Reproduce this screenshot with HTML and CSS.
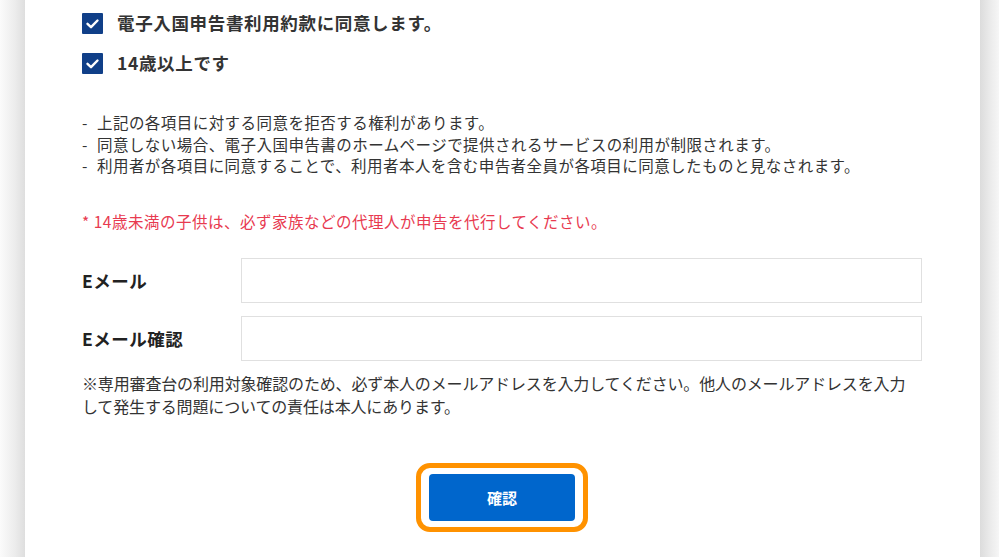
FILE: index.html
```html
<!DOCTYPE html>
<html lang="ja">
<head>
<meta charset="utf-8">
<title>電子入国申告書</title>
<link rel="stylesheet" href="styles.css">
</head>
<body>
<div class="page">
  <div class="edge edge-left"></div>
  <main class="panel">
    <div class="checks">
      <label class="check-row">
        <span class="box"><svg viewBox="0 0 21 21" width="21" height="21"><polyline points="5.5,10.8 9,14.2 15.5,7.5" fill="none" stroke="#fff" stroke-width="2.4" stroke-linecap="round" stroke-linejoin="round"/></svg></span>
        <span class="check-text">電子入国申告書利用約款に同意します。</span>
      </label>
      <label class="check-row">
        <span class="box"><svg viewBox="0 0 21 21" width="21" height="21"><polyline points="5.5,10.8 9,14.2 15.5,7.5" fill="none" stroke="#fff" stroke-width="2.4" stroke-linecap="round" stroke-linejoin="round"/></svg></span>
        <span class="check-text">14歳以上です</span>
      </label>
    </div>

    <div class="notes">
      <p class="note-line"><span class="dash">-</span><span>上記の各項目に対する同意を拒否する権利があります。</span></p>
      <p class="note-line"><span class="dash">-</span><span>同意しない場合、電子入国申告書のホームページで提供されるサービスの利用が制限されます。</span></p>
      <p class="note-line"><span class="dash">-</span><span>利用者が各項目に同意することで、利用者本人を含む申告者全員が各項目に同意したものと見なされます。</span></p>
    </div>

    <p class="warning">* 14歳未満の子供は、必ず家族などの代理人が申告を代行してください。</p>

    <div class="form">
      <div class="form-row">
        <span class="form-label">Eメール</span>
        <input class="form-input" type="text">
      </div>
      <div class="form-row">
        <span class="form-label">Eメール確認</span>
        <input class="form-input" type="text">
      </div>
    </div>

    <p class="mail-note">※専用審査台の利用対象確認のため、必ず本人のメールアドレスを入力してください。他人のメールアドレスを入力して発生する問題についての責任は本人にあります。</p>

    <div class="actions">
      <div class="focus-ring">
        <button class="btn" type="button">確認</button>
      </div>
    </div>
  </main>
  <div class="edge edge-right"></div>
</div>
</body>
</html>
```

FILE: styles.css
```css
html, body {
  margin: 0;
  padding: 0;
  height: 100%;
  background: #ffffff;
}

body {
  font-family: "Noto Sans CJK JP", "Noto Sans", sans-serif;
  color: #333333;
  overflow: hidden;
}

.page {
  display: flex;
  min-height: 557px;
}

.edge {
  flex: none;
}

.edge-left {
  width: 25px;
  background: linear-gradient(to right, #fbfbfb 0%, #ececec 60%, #dedede 100%);
}

.edge-right {
  width: 19px;
  background: linear-gradient(to right, #dcdcdc 0%, #eaeaea 50%, #f6f6f6 100%);
}

.panel {
  flex: 1;
  background: #ffffff;
  padding: 13px 58px 0 57px;
}

.checks {
  display: flex;
  flex-direction: column;
  gap: 19px;
}

.check-row {
  display: flex;
  align-items: center;
  gap: 14px;
  height: 21px;
  overflow: visible;
}

.box {
  width: 21px;
  height: 21px;
  flex: none;
  background: #103f88;
  border-radius: 1px;
  display: block;
}

.box svg {
  display: block;
}

.check-text {
  font-size: 17.5px;
  font-weight: 700;
  letter-spacing: 0.65px;
  color: #333333;
  line-height: 21px;
  margin-top: -2px;
}

.notes {
  margin-top: 38px;
}

.note-line {
  margin: 0;
  display: flex;
  font-size: 15.5px;
  letter-spacing: 0.45px;
  line-height: 21.5px;
  color: #333333;
}

.dash {
  width: 15px;
  flex: none;
  letter-spacing: 0;
}

.warning {
  margin: 34px 0 0;
  font-size: 15.5px;
  letter-spacing: 0.5px;
  line-height: 21.5px;
  color: #e83a50;
}

.form {
  margin-top: 26px;
  display: flex;
  flex-direction: column;
  gap: 13px;
}

.form-row {
  display: flex;
  align-items: center;
}

.form-label {
  width: 159px;
  flex: none;
  font-size: 17.5px;
  letter-spacing: 0.5px;
  font-weight: 700;
  color: #222222;
}

.form-input {
  flex: 1;
  height: 45px;
  box-sizing: border-box;
  margin: 0;
  border: 1.5px solid #e0e0e0;
  border-radius: 0;
  background: #ffffff;
  font: inherit;
  padding: 0 12px;
}

.mail-note {
  margin: 11px 0 0;
  max-width: 835px;
  font-size: 16px;
  letter-spacing: -0.15px;
  line-height: 23px;
  color: #333333;
}

.actions {
  margin-top: 45px;
  display: flex;
  justify-content: center;
}

.focus-ring {
  border: 5px solid #ff9200;
  border-radius: 14px;
  padding: 6px 8px;
  display: flex;
}

.btn {
  width: 146px;
  height: 47px;
  border: none;
  border-radius: 4px;
  background: #0066cc;
  color: #ffffff;
  font-family: "Noto Sans CJK JP", "Noto Sans", sans-serif;
  font-size: 15px;
  font-weight: 700;
  cursor: pointer;
}
```
